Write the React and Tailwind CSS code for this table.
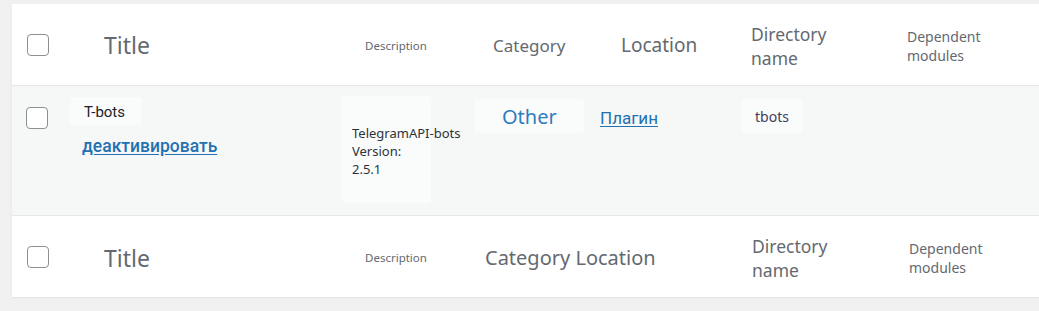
const noto = { fontFamily: '"Noto Sans", "Open Sans", sans-serif' };
const roboto = { fontFamily: 'Roboto, "Noto Sans", sans-serif' };

function Checkbox({ className = "" }) {
  return (
    <span
      className={`block h-[22px] w-[22px] shrink-0 rounded-[4px] border border-[#8c8f94] bg-white ${className}`}
    />
  );
}

function HeadRow({ footer = false }) {
  return (
    <div
      className={`flex items-center text-[#646970] ${footer ? "h-[81px] pt-[3px]" : "h-[82px] border-b border-[#e6e8e8] pt-[2px]"}`}
      style={noto}
    >
      <Checkbox className={footer ? "ml-[15px] -mt-[3px]" : "ml-[15px] -mt-[2px]"} />
      <div className="ml-[55px] w-[261px] text-[23px]">Title</div>
      {footer ? (
        <>
          <div className="w-[120px] text-[11.5px]">Description</div>
          <div className="w-[267px] text-[20px]">Category Location</div>
        </>
      ) : (
        <>
          <div className="w-[128px] text-[11.5px]">Description</div>
          <div className="w-[128px] text-[17px]">Category</div>
          <div className="w-[130px] text-[19px]">Location</div>
        </>
      )}
      <div className={`${footer ? "w-[157px]" : "w-[156px]"} text-[17.5px] leading-[24px]`}>
        Directory
        <br />
        name
      </div>
      <div className="text-[14px] leading-[19px]">
        Dependent
        <br />
        modules
      </div>
    </div>
  );
}

function BodyRow() {
  return (
    <div className="flex h-[130px] items-start border-b border-[#e6e8e8] bg-[#f6f7f7]">
      <Checkbox className="ml-[14px] mt-[21px]" />
      <div className="ml-[22px] w-[272px] pt-[11px]">
        <div
          className="w-[72px] rounded-[3px] bg-[#fafbfb] pt-[6px] pb-[4px] pl-[14px] text-[15px] leading-[18px] text-[#1d2327]"
          style={roboto}
        >
          T-bots
        </div>
        <a
          href="#"
          className="mt-[11px] ml-[12px] block text-[17.5px] font-medium leading-[20px] text-[#2271b1] underline underline-offset-2"
          style={roboto}
        >
          деактивировать
        </a>
      </div>
      <div className="mt-[10px] h-[107px] w-[89px] shrink-0 rounded-[3px] bg-[#fafbfb] pl-[10px] pt-[28px]">
        <div className="whitespace-nowrap text-[13px] leading-[18px] text-[#2c3338]" style={noto}>
          TelegramAPI-bots
          <br />
          Version:
          <br />
          2.5.1
        </div>
      </div>
      <div className="ml-[43px] mt-[13px] h-[34px] w-[110px] shrink-0 rounded-[3px] bg-[#fafbfb] pl-[28px] pt-[4px] text-[20px] leading-[28px] text-[#2e7bbf]" style={noto}>
        Other
      </div>
      <a
        href="#"
        className="ml-[16px] mt-[22px] w-[141px] shrink-0 text-[17px] leading-[20px] text-[#2271b1] underline underline-offset-2"
        style={roboto}
      >
        Плагин
      </a>
      <div className="mt-[13px] h-[34px] w-[62px] shrink-0 rounded-[3px] bg-[#fafbfb] pl-[14px] pt-[8px] text-[14px] leading-[20px] text-[#3c3f5c]" style={noto}>
        tbots
      </div>
    </div>
  );
}

export default function App() {
  return (
    <div className="h-[311px] w-[1039px] overflow-hidden bg-[#f0f0f1] pl-[12px] pt-[4px]">
      <div className="w-[1040px] bg-white shadow-[0_1px_2px_rgba(0,0,0,0.06)]">
        <HeadRow />
        <BodyRow />
        <HeadRow footer />
      </div>
    </div>
  );
}
